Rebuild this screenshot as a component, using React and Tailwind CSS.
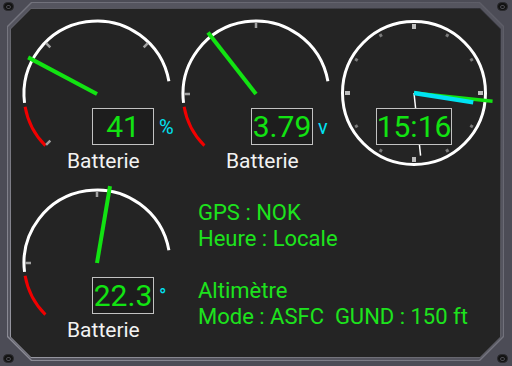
import React from 'react';

const GREEN = '#12e312';
const CYAN = '#00e2f2';

// bevelled corners of the bezel and screen
const bevelOuter = '[clip-path:polygon(24px_0,calc(100%_-_24px)_0,100%_24px,100%_calc(100%_-_24px),calc(100%_-_24px)_100%,24px_100%,0_calc(100%_-_24px),0_24px)]';
const bevelRim = '[clip-path:polygon(21px_0,calc(100%_-_21px)_0,100%_21px,100%_calc(100%_-_21px),calc(100%_-_21px)_100%,21px_100%,0_calc(100%_-_21px),0_21px)]';
const bevelScreen = '[clip-path:polygon(20px_0,calc(100%_-_20px)_0,100%_20px,100%_calc(100%_-_20px),calc(100%_-_20px)_100%,20px_100%,0_calc(100%_-_20px),0_20px)]';

const pt = (cx, cy, r, deg) => {
  const a = (deg * Math.PI) / 180;
  return [cx + r * Math.cos(a), cy + r * Math.sin(a)];
};

const arc = (cx, cy, r, a1, a2) => {
  const [x1, y1] = pt(cx, cy, r, a1);
  const [x2, y2] = pt(cx, cy, r, a2);
  return `M${x1} ${y1} A${r} ${r} 0 ${a2 - a1 > 180 ? 1 : 0} 1 ${x2} ${y2}`;
};

function Radial({ cx, cy, r1, r2, angle, color, width }) {
  const [x1, y1] = pt(cx, cy, r1, angle);
  const [x2, y2] = pt(cx, cy, r2, angle);
  return <line x1={x1} y1={y1} x2={x2} y2={y2} stroke={color} strokeWidth={width} />;
}

function ValueBox({ value, width, offset }) {
  return (
    <div
      className={`${offset} ${width} h-[37px] border border-[#c2c2c2] bg-[#1d1d1d] flex items-center justify-center text-[30px] leading-none text-[#12e312]`}
    >
      {value}
    </div>
  );
}

function Dial({ value, unit, needle, ticks }) {
  const cx = 79, cy = 80, r = 73;
  return (
    <div className="relative w-[158px] h-[169px]">
      <svg className="absolute inset-0" width="158" height="169">
        <path d={arc(cx, cy, r, 135, 170)} stroke="#f00000" strokeWidth="3" fill="none" />
        <path d={arc(cx, cy, r, 173, 350)} stroke="#ffffff" strokeWidth="3" fill="none" />
        {ticks.map((a) => (
          <Radial key={a} cx={cx} cy={cy} r1={66} r2={72} angle={a} color="#a0a0a0" width={2.5} />
        ))}
        <Radial cx={cx} cy={cy} r1={0} r2={78} angle={needle} color={GREEN} width={4} />
      </svg>
      <div className="relative pt-[94px]">
        <div className="flex items-center">
          <ValueBox value={value} width="w-[62px]" offset="ml-[74px]" />
          <span className="ml-[5px] text-[20px] leading-none text-[#00e2f2]">{unit}</span>
        </div>
        <div className="mt-[6px] pl-[49px] text-[21px] leading-none text-[#f2f2f2]">Batterie</div>
      </div>
    </div>
  );
}

function Clock() {
  const cx = 78, cy = 79, r = 71.5;
  const hours = [0, 30, 60, 90, 120, 150, 180, 210, 240, 270, 300, 330];
  return (
    <div className="relative w-[158px] h-[169px]">
      <svg className="absolute inset-0" width="158" height="169">
        <circle cx={cx} cy={cy} r={r} stroke="#ffffff" strokeWidth="3" fill="none" />
        {hours.map((a) =>
          a % 90 === 0 ? (
            <Radial key={a} cx={cx} cy={cy} r1={64} r2={69} angle={a} color="#bdbdbd" width={4} />
          ) : (
            <Radial key={a} cx={cx} cy={cy} r1={65} r2={68} angle={a} color="#7a7a7a" width={3} />
          )
        )}
        <Radial cx={cx} cy={cy} r1={0} r2={63} angle={84} color="#ffffff" width={1.5} />
        <Radial cx={cx} cy={cy} r1={0} r2={79} angle={6} color={GREEN} width={3.5} />
        <Radial cx={cx} cy={cy} r1={0} r2={60} angle={9} color={CYAN} width={4.5} />
      </svg>
      <div className="relative pt-[94px]">
        <ValueBox value="15:16" width="w-[76px]" offset="ml-[40px]" />
      </div>
    </div>
  );
}

function Screw({ className }) {
  return (
    <div className={`absolute w-[11px] h-[9px] rounded-full bg-[#131313] border border-[#2a2a2e] flex items-center justify-center ${className}`}>
      <div className="w-[5px] h-[4px] rounded-full border border-[#4a4a50]" />
    </div>
  );
}

export default function App() {
  return (
    <div className="relative w-[512px] h-[366px] bg-[#4c4c56] pt-[2px] pl-[7px] pr-[8px] pb-[5px] [font-family:Roboto,sans-serif]">
      <div className={`h-full bg-linear-to-tr from-[#8c8c96] to-[#5c5c66] p-px ${bevelOuter}`}>
        <div className={`h-full bg-[#55555f] pt-[5px] pl-[2px] pr-[2px] pb-[2px] ${bevelOuter}`}>
          <div className={`h-full bg-linear-to-tr from-[#9a9aa4] to-[#2e2e34] p-px ${bevelRim}`}>
            <div className={`h-full bg-[#242424] pl-[7px] pt-[5px] ${bevelScreen}`}>
              <div className="flex gap-[1px]">
                <Dial value="41" unit="%" needle={208} ticks={[135, 225, 315]} />
                <Dial value="3.79" unit="v" needle={232} ticks={[180, 270]} />
                <Clock />
              </div>
              <div className="flex">
                <Dial value="22.3" unit="°" needle={279.6} ticks={[180, 270]} />
                <div className="ml-[22px] pt-[17px] flex flex-col text-[22px] leading-[26px] text-[#1de31d]">
                  <span>GPS : NOK</span>
                  <span>Heure : Locale</span>
                  <span className="h-[26px]" />
                  <span>Altimètre</span>
                  <span className="whitespace-pre">Mode : ASFC  GUND : 150 ft</span>
                </div>
              </div>
            </div>
          </div>
        </div>
      </div>
      <Screw className="left-[3px] top-[2px]" />
      <Screw className="left-[497px] top-[2px]" />
      <Screw className="left-[3px] top-[354px]" />
      <Screw className="left-[497px] top-[354px]" />
    </div>
  );
}
